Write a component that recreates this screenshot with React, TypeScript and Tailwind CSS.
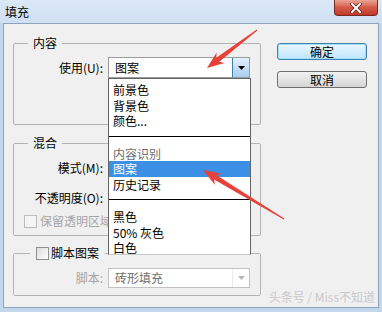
const font = "font-['Noto_Sans_CJK_SC','Noto_Sans',sans-serif]";

/**
 * Red annotation arrow, drawn as one tapered polygon
 */
const arrowPoints = (
  tx: number,
  ty: number,
  hx: number,
  hy: number,
  headLen: number,
  headW: number,
  tailW: number,
  neckW: number
) => {
  const dx = hx - tx;
  const dy = hy - ty;
  const len = Math.sqrt(dx * dx + dy * dy);
  const ux = dx / len;
  const uy = dy / len;
  const nx = -uy;
  const ny = ux;
  const bx = hx - ux * headLen;
  const by = hy - uy * headLen;
  const bx2 = hx - ux * headLen * 0.8;
  const by2 = hy - uy * headLen * 0.8;
  const pts = [
    [tx + (nx * tailW) / 2, ty + (ny * tailW) / 2],
    [bx2 + (nx * neckW) / 2, by2 + (ny * neckW) / 2],
    [bx + (nx * headW) / 2, by + (ny * headW) / 2],
    [hx, hy],
    [bx - (nx * headW) / 2, by - (ny * headW) / 2],
    [bx2 - (nx * neckW) / 2, by2 - (ny * neckW) / 2],
    [tx - (nx * tailW) / 2, ty - (ny * tailW) / 2],
  ];
  return pts.map((p) => `${p[0].toFixed(1)},${p[1].toFixed(1)}`).join(' ');
};

const Arrows = () => (
  <svg className="absolute inset-0 pointer-events-none" width="382" height="312" viewBox="0 0 382 312">
    <polygon points={arrowPoints(257, 30, 207, 68, 17, 13, 1, 5)} fill="#e8413a" />
    <polygon points={arrowPoints(284, 219, 203, 170, 18, 13, 1, 5)} fill="#e8413a" />
  </svg>
);

/**
 * Small building blocks
 */
const Checkbox = ({ disabled }: { disabled?: boolean }) => (
  <span
    className={
      disabled
        ? 'inline-block w-[13px] h-[13px] border border-[#bcbcbc] bg-[#f4f4f4]'
        : 'inline-block w-[13px] h-[13px] border border-[#8f8f8f] bg-gradient-to-br from-[#dcdcdc] to-white'
    }
  />
);

const ArrowDown = ({ color }: { color: string }) => (
  <svg width="7" height="4" viewBox="0 0 7 4">
    <path d="M0 0h7L3.5 4z" fill={color} />
  </svg>
);

const Label = ({ children, gray }: { children: React.ReactNode; gray?: boolean }) => (
  <div className={`w-[89px] text-right ${gray ? 'text-[#a5a5a5]' : 'text-black'}`}>{children}</div>
);

const menuItems: { label?: string; sep?: boolean; gray?: boolean; active?: boolean }[] = [
  { label: '前景色' },
  { label: '背景色' },
  { label: '颜色...' },
  { sep: true },
  { label: '内容识别', gray: true },
  { label: '图案', active: true },
  { label: '历史记录' },
  { sep: true },
  { label: '黑色' },
  { label: '50% 灰色' },
  { label: '白色' },
];

/**
 * Open list of the 使用 select
 */
const DropdownList = () => (
  <div className="absolute left-[108px] top-[78px] w-[143px] h-[177px] bg-white border border-[#646464] border-b-[#c8c8c8] pt-[3px]">
    {menuItems.map((item, i) =>
      item.sep ? (
        <div key={i} className="h-[17px] pt-[7px]">
          <div className="h-px bg-black" />
        </div>
      ) : (
        <div
          key={i}
          className={`h-[15.5px] leading-[15.5px] pl-[4px] ${
            item.active ? 'bg-[#3b8fe5] text-white' : item.gray ? 'text-[#6d6d6d]' : 'text-black'
          }`}
        >
          {item.label}
        </div>
      )
    )}
  </div>
);

export default function App() {
  return (
    <div className={`relative w-[382px] h-[312px] overflow-hidden bg-[#c2d6ec] text-[12px] leading-[16px] ${font}`}>
      {/* Title bar */}
      <div className="h-[23px] flex items-start bg-gradient-to-b from-[#dbe8f5] to-[#cfe0f2]">
        <div className="pl-[5px] pt-[4px] text-[12px] text-black">填充</div>
        <div className="ml-auto mr-[4px] w-[44px] h-[16px] rounded-b-[4px] border border-t-0 border-[#7b2a22] bg-gradient-to-b from-[#e8a597] via-[#d45a48] to-[#c0392b] flex items-center justify-center">
          <svg width="12" height="10" viewBox="0 0 12 10">
            <path d="M2 1l8 8M10 1L2 9" stroke="#5a1a14" strokeWidth="3.4" strokeLinecap="square" />
            <path d="M2 1l8 8M10 1L2 9" stroke="white" strokeWidth="2" strokeLinecap="square" />
          </svg>
        </div>
      </div>

      {/* Client area */}
      <div className="mx-[3px] h-[285px] border border-[#8da3bd] bg-[#f0f0f0] flex">
        <div className="pl-[9px] w-[257px] flex flex-col">
          {/* 内容 */}
          <fieldset className="mt-[11px] h-[90px] border border-[#b4b4b4] rounded-[2px]">
            <legend className="ml-[14px] px-[5px] text-black">内容</legend>
            <div className="mt-[6px] flex items-center gap-[5px]">
              <Label>使用(U):</Label>
              <div className="w-[142px] h-[21px] border border-[#9c9c9c] bg-white flex items-stretch">
                <div className="flex-1 pl-[6px] leading-[19px] text-black">图案</div>
                <div className="w-[17px] border-l border-[#3c7fb1] bg-gradient-to-b from-[#e3f0fb] to-[#a9cdee] flex items-center justify-center">
                  <ArrowDown color="#000" />
                </div>
              </div>
            </div>
          </fieldset>

          {/* 混合 */}
          <fieldset className="mt-[10px] h-[101px] border border-[#b4b4b4] rounded-[2px]">
            <legend className="ml-[14px] px-[5px] text-black">混合</legend>
            <div className="mt-[6px] h-[21px] flex items-center gap-[5px]">
              <Label>模式(M):</Label>
              <div className="w-[142px] h-[21px] border border-[#9c9c9c] bg-white" />
            </div>
            <div className="mt-[9px] h-[21px] flex items-center gap-[5px]">
              <Label>不透明度(O):</Label>
              <div className="w-[60px] h-[21px] border border-[#9c9c9c] bg-white" />
            </div>
            <div className="mt-[5px] pl-[10px] flex items-center gap-[3px] text-[#a5a5a5]">
              <Checkbox disabled />
              <span>保留透明区域</span>
            </div>
          </fieldset>

          {/* 脚本图案 */}
          <fieldset className="mt-[9px] h-[51px] border border-[#b4b4b4] rounded-[2px]">
            <legend className="ml-[16px] px-[6px] flex items-center gap-[2px] text-black">
              <Checkbox />
              <span>脚本图案</span>
            </legend>
            <div className="mt-[7px] flex items-center gap-[5px]">
              <Label gray>脚本:</Label>
              <div className="w-[142px] h-[20px] border border-[#c2c2c2] bg-white flex items-stretch">
                <div className="flex-1 pl-[6px] leading-[18px] text-[#6d6d6d]">砖形填充</div>
                <div className="w-[17px] border-l border-[#ececec] flex items-center justify-center">
                  <ArrowDown color="#b5b5b5" />
                </div>
              </div>
            </div>
          </fieldset>
        </div>

        {/* Buttons */}
        <div className="ml-[16px] pt-[19px] flex flex-col gap-[11px]">
          <button className="w-[90px] h-[17px] rounded-[3px] border border-[#3c7fb1] bg-gradient-to-b from-[#eaf6fd] to-[#bee6fd] shadow-[inset_0_0_0_1px_#a6e1fb] text-black leading-[15px]">
            确定
          </button>
          <button className="w-[90px] h-[17px] rounded-[3px] border border-[#707070] bg-gradient-to-b from-[#f2f2f2] to-[#d5d5d5] text-black leading-[15px]">
            取消
          </button>
        </div>
      </div>

      <DropdownList />

      {/* Watermark */}
      <div className="absolute right-[7px] top-[289px] text-[12px] text-[#c9c9c9]">头条号 / Miss不知道</div>

      <Arrows />
    </div>
  );
}
